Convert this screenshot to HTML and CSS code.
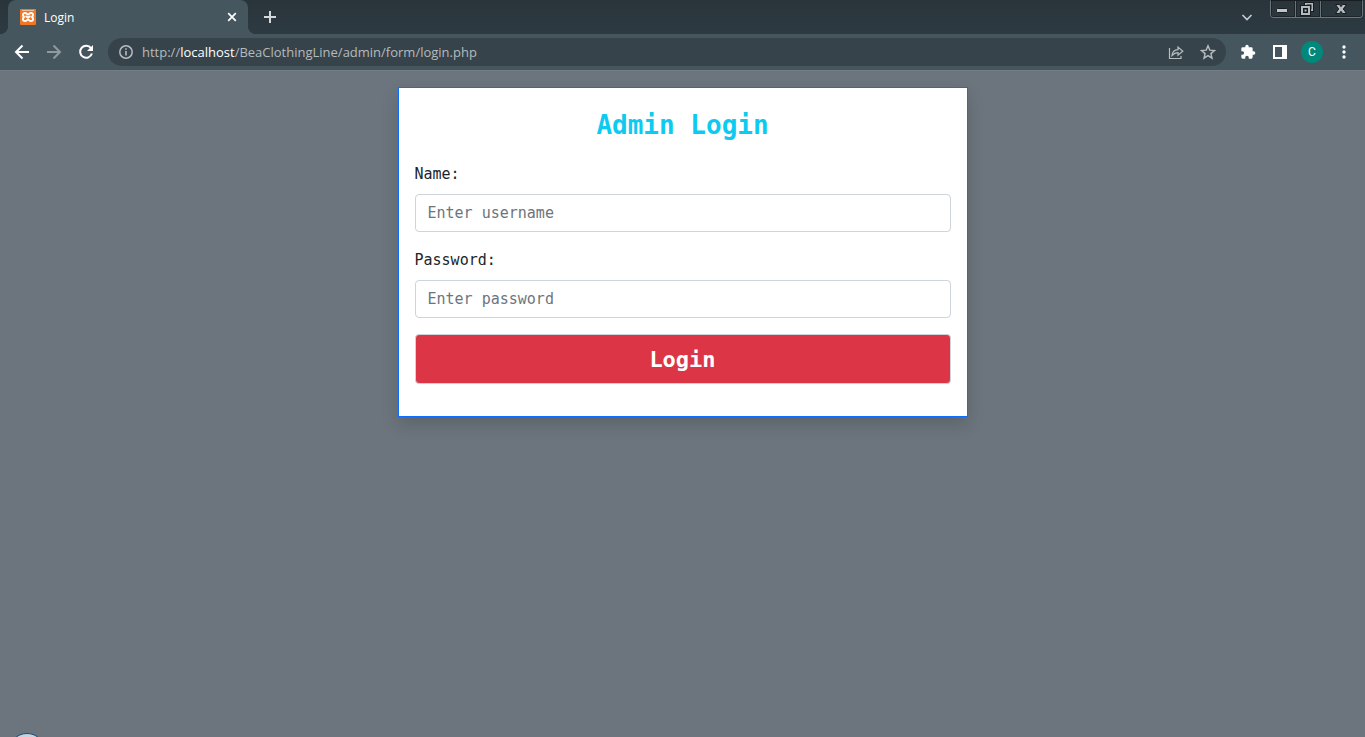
FILE: index.html
```html
<!DOCTYPE html>
<html lang="en">
<head>
<meta charset="utf-8">
<meta name="viewport" content="width=device-width, initial-scale=1">
<title>Login</title>
<link rel="stylesheet" href="styles.css">
</head>
<body>
<header class="browser">
  <div class="tabstrip">
    <div class="tab">
      <svg class="favicon" width="16" height="16" viewBox="0 0 16 16"><rect width="16" height="16" rx="1" fill="#f37623"/><path d="M2 1.500h12" stroke="#f9b98b"/><path d="M5 4C2.300 4 2.300 7.500 4.600 8 2.300 8.500 2.300 12 5 12c1.800 0 2-1.500 3-1.500s1.200 1.500 3 1.500c2.700 0 2.700-3.500.4-4 2.300-.5 2.300-4-.4-4C9.200 4 9 5.500 8 5.500S6.800 4 5 4zM5.500 7.200L8 8.500l2.500-1.300" fill="none" stroke="#fff" stroke-width="1.900"/></svg>
      <span class="tab-title">Login</span>
      <button class="icon-btn" aria-label="Close tab"><svg width="16" height="16" viewBox="0 0 16 16"><path d="M4.200 4.200l7.600 7.600M11.800 4.200l-7.600 7.600" stroke="#fff" stroke-width="1.700"/></svg></button>
    </div>
    <button class="icon-btn new-tab" aria-label="New tab"><svg width="16" height="16" viewBox="0 0 16 16"><path d="M8 2v12M2 8h12" stroke="#d5d9db" stroke-width="2"/></svg></button>
    <button class="icon-btn tab-search" aria-label="Search tabs"><svg width="16" height="16" viewBox="0 0 16 16"><path d="M3.500 6l4.500 4.500L12.500 6" fill="none" stroke="#c5cacd" stroke-width="1.700"/></svg></button>
    <div class="window-controls">
      <button class="win-btn" aria-label="Minimize"><svg width="14" height="14" viewBox="0 0 14 14"><rect x="1.500" y="6.500" width="11" height="4" rx="1" fill="#c0c5c8" stroke="#171d21"/></svg></button>
      <button class="win-btn" aria-label="Restore"><svg width="14" height="14" viewBox="0 0 14 14"><path fill="#171d21" d="M4 0h10v10h-3v4H0V3h4z"/><path fill="#b4babd" fill-rule="evenodd" d="M5 1h8v8h-2V7.500h.5v-5h-5V3H5zM1 4h9v9H1zM3 6v5h5V6z"/><rect x="4.500" y="7.500" width="2" height="2" fill="#b4babd"/></svg></button>
      <button class="win-btn win-close" aria-label="Close"><svg width="14" height="14" viewBox="0 0 14 14"><path d="M1.500 2.500h4L7 4.700l1.500-2.200h4L9.300 7l3.200 4.500h-4L7 9.300l-1.500 2.200h-4L4.700 7z" fill="#b4babd" stroke="#171d21"/></svg></button>
    </div>
  </div>
  <div class="toolbar">
    <nav class="nav-buttons" aria-label="History">
      <button class="icon-btn" aria-label="Back"><svg width="16" height="16" viewBox="0 0 16 16"><path d="M15 8H2.500M8.500 1.500L2 8l6.500 6.500" fill="none" stroke="#fff" stroke-width="2"/></svg></button>
      <button class="icon-btn" aria-label="Forward"><svg width="16" height="16" viewBox="0 0 16 16"><path d="M1 8h12.500M7.500 1.500L14 8l-6.500 6.500" fill="none" stroke="#8f9a9f" stroke-width="2"/></svg></button>
      <button class="icon-btn" aria-label="Reload"><svg width="16" height="16" viewBox="0 0 16 16"><path d="M13 4.200A6 6 0 1 0 13.900 9.500" fill="none" stroke="#fff" stroke-width="2"/><path d="M15 1v6H9z" fill="#fff"/></svg></button>
    </nav>
    <div class="omnibox">
      <svg width="16" height="16" viewBox="0 0 16 16"><circle cx="8" cy="8" r="6.200" fill="none" stroke="#b6bdc1" stroke-width="1.500"/><path d="M8 7v4.500M8 4.200v1.600" stroke="#b6bdc1" stroke-width="1.600"/></svg>
      <div class="url">http://<span class="host">localhost</span>/BeaClothingLine/admin/form/login.php</div>
      <button class="icon-btn" aria-label="Share"><svg width="16" height="16" viewBox="0 0 16 16"><path d="M1.500 4v10.500H13V12M4 11.500c.3-3.700 2.500-5.700 6-5.800V3l4.800 4.200L10 11.300V8.700C7.500 8.700 5.700 9.500 4 11.500z" fill="none" stroke="#b6bdc1" stroke-width="1.200"/></svg></button>
      <button class="icon-btn" aria-label="Bookmark"><svg width="16" height="16" viewBox="0 0 16 16"><path d="M8 1.800l1.800 4.300 4.700.4-3.600 3.100 1.100 4.600L8 11.700l-4 2.500 1.100-4.600L1.500 6.500l4.700-.4z" fill="none" stroke="#b6bdc1" stroke-width="1.400"/></svg></button>
    </div>
    <div class="actions">
      <button class="icon-btn" aria-label="Extensions"><svg width="16" height="16" viewBox="0 0 24 24"><path fill="#fff" d="M20.500 11H19V7a2 2 0 0 0-2-2h-4V3.500a2.500 2.500 0 0 0-5 0V5H4a2 2 0 0 0-2 2v3.800h1.500a2.700 2.700 0 0 1 0 5.400H2V20a2 2 0 0 0 2 2h3.800v-1.500a2.700 2.700 0 0 1 5.400 0V22H17a2 2 0 0 0 2-2v-4h1.500a2.500 2.500 0 0 0 0-5z"/></svg></button>
      <button class="icon-btn" aria-label="Side panel"><svg width="16" height="16" viewBox="0 0 16 16"><path fill="#fff" fill-rule="evenodd" d="M1 1h14v14H1zM3 3v10h7V3z"/></svg></button>
      <button class="avatar" aria-label="Profile C">C</button>
      <button class="icon-btn" aria-label="Menu"><svg width="16" height="16" viewBox="0 0 16 16" fill="#fff"><circle cx="8" cy="3" r="1.700"/><circle cx="8" cy="8" r="1.700"/><circle cx="8" cy="13" r="1.700"/></svg></button>
    </div>
  </div>
</header>
<main class="page">
  <form class="card">
    <h1 class="card-title">Admin Login</h1>
    <label class="form-label" for="username">Name:</label>
    <input class="form-control" id="username" type="text" placeholder="Enter username">
    <label class="form-label" for="password">Password:</label>
    <input class="form-control" id="password" type="password" placeholder="Enter password">
    <button class="submit" type="submit">Login</button>
  </form>
</main>
<div class="orb"></div>
</body>
</html>
```

FILE: styles.css
```css
* {
  box-sizing: border-box;
}

body {
  margin: 0;
  min-height: 100vh;
  overflow: hidden;
  background: #6c757d;
  font-family: "Open Sans", "Noto Sans", sans-serif;
}

button {
  margin: 0;
  padding: 0;
  border: 0;
  background: none;
}

svg {
  display: block;
  flex: none;
}

.browser {
  background: #45565f;
  border-bottom: 1px solid #727d85;
}

.tabstrip {
  display: flex;
  align-items: center;
  height: 34px;
  padding-left: 8px;
  background: linear-gradient(#2a353b, #2d3a41);
}

.tab {
  position: relative;
  display: flex;
  align-items: center;
  gap: 8px;
  width: 240px;
  height: 34px;
  padding: 0 8px 0 12px;
  border-radius: 8px 8px 0 0;
  background: #45565f;
  color: #fff;
  font-size: 12px;
}

.tab::before,
.tab::after {
  content: "";
  position: absolute;
  bottom: 0;
  width: 8px;
  height: 8px;
}

.tab::before {
  right: 100%;
  background: radial-gradient(circle at 0 0, transparent 8px, #45565f 8px);
}

.tab::after {
  left: 100%;
  background: radial-gradient(circle at 100% 0, transparent 8px, #45565f 8px);
}

.tab-title {
  flex: 1;
}

.new-tab {
  margin-left: 14px;
}

.tab-search {
  margin-left: auto;
}

.window-controls {
  display: flex;
  align-self: flex-start;
  height: 18px;
  margin: 0 2px 0 15px;
  border: 1px solid #6b767c;
  border-top-color: #171d21;
  border-radius: 0 0 4px 4px;
  overflow: hidden;
}

.win-btn {
  display: grid;
  place-items: center;
  width: 25px;
  padding-right: 2px;
  border-right: 1px solid #6b767c;
  box-shadow: inset 1px 0 #1d252a, inset -1px -1px #1d252a;
}

.win-close {
  width: 41px;
  border-right: 0;
}

.toolbar {
  display: flex;
  align-items: center;
  height: 36px;
  padding: 0 13px 0 14px;
}

.nav-buttons {
  display: flex;
  gap: 16px;
  margin-right: 14px;
}

.omnibox {
  display: flex;
  flex: 1;
  align-items: center;
  gap: 16px;
  height: 28px;
  padding: 0 10px;
  border-radius: 14px;
  background: #37434a;
}

.url {
  flex: 1;
  margin-left: -8px;
  color: #b4babd;
  font-size: 13px;
  line-height: 20px;
  white-space: nowrap;
}

.host {
  color: #fff;
}

.actions {
  display: flex;
  align-items: center;
  gap: 16px;
  margin-left: 14px;
}

.avatar {
  width: 22px;
  height: 22px;
  margin: 0 -3px;
  border-radius: 50%;
  background: #00897b;
  color: #fff;
  font-family: Roboto, sans-serif;
  font-size: 12px;
}

.page {
  display: flex;
  justify-content: center;
  width: 100%;
  max-width: 1140px;
  margin: 0 auto;
  padding-top: 16px;
}

.card {
  width: 50%;
  min-width: 320px;
  padding: 20px 16px 32px;
  border: 1px solid #0d6efd;
  background: #fff;
  box-shadow: 0 8px 16px rgba(0, 0, 0, 0.15);
  color: #212529;
  font-family: "DejaVu Sans Mono", monospace;
}

.card-title {
  margin: 0 0 20px;
  color: #0dcaf0;
  font-size: 26px;
  line-height: 34px;
  text-align: center;
}

.form-label {
  display: block;
  margin-bottom: 8px;
  font-size: 15px;
  line-height: 24px;
}

.form-control {
  display: block;
  width: 100%;
  height: 38px;
  margin: 0 0 16px;
  padding: 6px 12px;
  border: 1px solid #ced4da;
  border-radius: 4px;
  background: #fff;
  color: #212529;
  font-family: inherit;
  font-size: 15px;
}

.form-control::placeholder {
  color: #6c757d;
  opacity: 1;
}

.submit {
  display: block;
  width: 100%;
  height: 50px;
  border: 1px solid #ced4da;
  border-radius: 4px;
  background: #dc3545;
  color: #fff;
  font-family: inherit;
  font-size: 22px;
  font-weight: 700;
}

.orb {
  position: fixed;
  bottom: -34px;
  left: 8px;
  width: 38px;
  height: 38px;
  border: 1px solid #1f4a70;
  border-radius: 50%;
  background: #c3d5e3;
}
```
